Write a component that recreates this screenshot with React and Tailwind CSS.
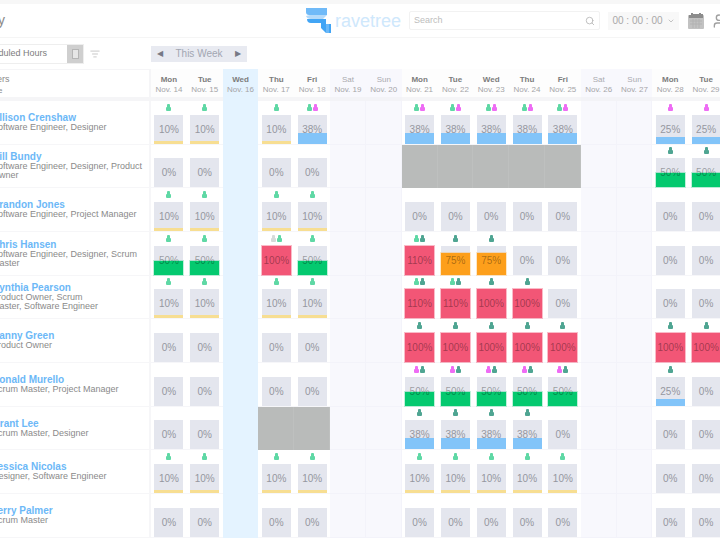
import { useState } from 'react';
import { ChevronDown, ListFilter, Search, Users } from 'lucide-react';

const DAYS = [
  { name: 'Mon', date: 'Nov. 14' },
  { name: 'Tue', date: 'Nov. 15' },
  { name: 'Wed', date: 'Nov. 16', type: 'today' },
  { name: 'Thu', date: 'Nov. 17' },
  { name: 'Fri', date: 'Nov. 18' },
  { name: 'Sat', date: 'Nov. 19', type: 'weekend' },
  { name: 'Sun', date: 'Nov. 20', type: 'weekend' },
  { name: 'Mon', date: 'Nov. 21' },
  { name: 'Tue', date: 'Nov. 22' },
  { name: 'Wed', date: 'Nov. 23' },
  { name: 'Thu', date: 'Nov. 24' },
  { name: 'Fri', date: 'Nov. 25' },
  { name: 'Sat', date: 'Nov. 26', type: 'weekend' },
  { name: 'Sun', date: 'Nov. 27', type: 'weekend' },
  { name: 'Mon', date: 'Nov. 28' },
  { name: 'Tue', date: 'Nov. 29' },
];

/* Cell format: "percent:markers". "off" is time off, "-" an empty day. */
const PEOPLE = [
  {
    name: 'Allison Crenshaw',
    roles: ['Software Engineer, Designer'],
    days: '10:g 10:g - 10:g 38:gm - - 38:gm 38:gm 38:gm 38:gm 38:gm - - 25:m 25:m',
  },
  {
    name: 'Bill Bundy',
    roles: ['Software Engineer, Designer, Product', 'Owner'],
    days: '0 0 - 0 0 - - off off off off off - - 50:t 50:t',
  },
  {
    name: 'Brandon Jones',
    roles: ['Software Engineer, Project Manager'],
    days: '10:g 10:g - 10:g 10:g - - 0 0 0 0 0 - - 0 0',
  },
  {
    name: 'Chris Hansen',
    roles: ['Software Engineer, Designer, Scrum', 'Master'],
    days: '50:g 50:g - 100:lg 50:g - - 110:gt 75:t 75:t 0 0 - - 0 0',
  },
  {
    name: 'Cynthia Pearson',
    roles: ['Product Owner, Scrum', 'Master, Software Engineer'],
    days: '10:g 10:g - 10:g 10:g - - 110:gt 110:gt 100:t 100:t 0 - - 0 0',
  },
  {
    name: 'Danny Green',
    roles: ['Product Owner'],
    days: '0 0 - 0 0 - - 100:t 100:t 100:t 100:t 100:t - - 100:t 100:t',
  },
  {
    name: 'Donald Murello',
    roles: ['Scrum Master, Project Manager'],
    days: '0 0 - 0 0 - - 50:mt 50:mt 50:mt 50:mt 50:mt - - 25:t 0',
  },
  {
    name: 'Grant Lee',
    roles: ['Scrum Master, Designer'],
    days: '0 0 - off off - - 38:t 38:t 38:t 38:t 0 - - 0 0',
  },
  {
    name: 'Jessica Nicolas',
    roles: ['Designer, Software Engineer'],
    days: '10:g 10:g - 10:g 10:g - - 10:g 10:g 10:g 10:g 10:g - - 0 0',
  },
  {
    name: 'Jerry Palmer',
    roles: ['Scrum Master'],
    days: '0 0 - 0 0 - - 0 0 0 0 0 - - 0 0',
  },
];

const MARKERS = {
  g: 'text-[#5fd8a5]',
  m: 'text-[#ee6cf4]',
  t: 'text-[#4fa592]',
  l: 'text-[#d5dad9]',
};

/* Colour of the load bar */
function barColor(percent) {
  if (percent >= 100) return 'bg-[#f25676] ring-1 ring-[#f25676]/40';
  if (percent >= 75) return 'bg-[#fd9f1b] ring-1 ring-[#fd9f1b]/25';
  if (percent >= 50) return 'bg-[#04c96f] ring-1 ring-[#04c96f]/25';
  if (percent >= 20) return 'bg-[#82c4f9]';
  return 'bg-[#f7de92]';
}

function columnColor(type) {
  if (type === 'today') return 'bg-[#e4f3ff]';
  if (type === 'weekend') return 'bg-[#f8f8fd] border-r border-b border-[#f3f3fa]';
  return 'bg-white border-b border-[#f6f6f9]';
}

function Marker({ color }) {
  return (
    <svg viewBox="0 0 5 7" className={`w-[5px] h-[7px] ${color}`} fill="currentColor" aria-hidden="true">
      <rect x="1" y="0" width="3" height="4" rx="1" />
      <rect x="0" y="3" width="5" height="4" rx="1" />
    </svg>
  );
}

function DayCell({ value, type }) {
  if (value === 'off') {
    return <td className="bg-[#b9bbba] border-r border-[#bec0bf]" />;
  }
  if (value === '-') return <td className={columnColor(type)} />;

  const [load, markers = ''] = value.split(':');
  const percent = Number(load);
  return (
    <td className={`p-0 align-bottom ${columnColor(type)}`}>
      <div className="flex flex-col items-center">
        <div className="h-[13px] pt-[2px] flex gap-px">
          {markers.split('').map((m) => (
            <Marker key={m} color={MARKERS[m]} />
          ))}
        </div>
        <div className="relative w-[29px] h-[29px] flex items-center justify-center bg-[#e4e6ee]">
          <div
            className={`absolute inset-x-0 bottom-0 ${barColor(percent)}`}
            style={{ height: `${Math.min(percent, 100)}%` }}
          />
          <span className={`relative text-[10px] leading-none ${percent >= 50 ? 'text-black/35' : 'text-[#9597a0]'}`}>
            {percent}%
          </span>
        </div>
      </div>
    </td>
  );
}

function Logo() {
  return (
    <div className="flex items-center gap-1">
      <svg viewBox="0 0 25 25" className="w-[25px] h-[25px]" aria-hidden="true">
        <path d="M0 0H21V7H3Q0 7 0 4Z" fill="#70baf8" />
        <path d="M0 8Q1 11 5 11H17L21 7H4Z" fill="#b4dafa" />
        <path d="M1 11H20V16H25V25H20L15 20V15H5Q1 15 1 11Z" fill="#42a5f5" />
        <path d="M20 16H23V25H20Z" fill="#6cb9f8" />
      </svg>
      <span className="text-[18px] leading-none text-[#cfe8fc]">ravetree</span>
    </div>
  );
}

function CalendarIcon() {
  return (
    <svg viewBox="0 0 16 16" className="w-4 h-4" aria-hidden="true">
      <rect x="0" y="2" width="16" height="14" rx="1" fill="#c2c2c2" />
      <path d="M3 0H5V1H11V0H13V1H15V5H1V2H3Z" fill="#8c8c8c" />
      <path d="M2 8H14M2 11H14M5 6V15M8 6V15M11 6V15" stroke="#b2b2b2" />
    </svg>
  );
}

export default function App() {
  const [query, setQuery] = useState('');

  return (
    <div className="overflow-hidden bg-white font-['Liberation_Sans',Arial,sans-serif] text-[#8a8a8a]">
      {/* Top bar */}
      <div className="h-1 bg-[#f7f7f7]" />
      <header className="h-[34px] flex items-center border-b border-[#f5f5f5]">
        <h1 className="w-[306px] shrink-0 pr-[301px] flex justify-end text-[14px] whitespace-nowrap">Capacity</h1>
        <Logo />
        <div className="flex-1 ml-2 h-[19px] flex items-center border border-[#f2f2f2] rounded-xs">
          <input
            type="search"
            aria-label="Search"
            placeholder="Search"
            value={query}
            onChange={(e) => setQuery(e.target.value)}
            className="flex-1 min-w-0 px-1 text-[9px] outline-none placeholder:text-[#bdbdbd]"
          />
          <Search className="w-[10px] h-[10px] mr-1 text-[#b5b5b5]" />
        </div>
        <button className="ml-2 w-[71px] h-[18px] flex items-center justify-center gap-1 bg-[#f8f8f8] text-[10px] text-[#a8a8a8] whitespace-nowrap">
          00 : 00 : 00
          <ChevronDown className="w-2 h-2" />
        </button>
        <button aria-label="Calendar" className="ml-[9px] shrink-0">
          <CalendarIcon />
        </button>
        <button aria-label="Team" className="ml-[9px] w-[7px] shrink-0 overflow-hidden text-[#a0a0a0]">
          <Users className="w-4 h-4" />
        </button>
      </header>

      {/* Filters */}
      <div className="h-[31px] flex items-center">
        <div className="relative w-[84px] h-5 flex border border-l-0 border-[#eeeeee]">
          <select
            aria-label="Hours"
            className="absolute -left-[22px] w-[105px] h-full appearance-none text-[9px] text-[#7d7d7d] outline-none"
          >
            <option>Scheduled Hours</option>
            <option>Actual Hours</option>
          </select>
          <span className="relative ml-auto w-4 flex items-center justify-center bg-[#cfcfcf] pointer-events-none">
            <span className="w-[7px] h-[10px] bg-[#e6e6e6] border border-[#b5b5b5]" />
          </span>
        </div>
        <button aria-label="Filter" className="ml-[6px] w-[54px] text-[#bdbdbd]">
          <ListFilter className="w-[10px] h-[10px]" />
        </button>
        <div className="ml-[7px] w-[96px] h-4 px-[5px] flex items-center justify-between bg-[#e8eaf1] text-[10px] text-[#a2a6b2]">
          <button aria-label="Previous week" className="w-2 text-[8px] leading-none text-[#777985]">◀</button>
          <button className="leading-none">This Week</button>
          <button aria-label="Next week" className="w-2 text-[8px] leading-none text-[#777985]">▶</button>
        </div>
      </div>

      {/* Capacity grid */}
      <table className="table-fixed w-[calc(100%+4px)] border-separate border-spacing-0">
        <colgroup>
          <col className="w-[151px]" />
          {DAYS.map((day) => (
            <col key={day.date} />
          ))}
        </colgroup>
        <thead>
          <tr className="h-8">
            <th className="p-0 align-top border-t border-r-2 border-b-4 border-[#f5f5f7] text-left font-normal text-[9px] leading-[12px]">
              <div className="-ml-[14px] pt-[3px]">Users</div>
              <div className="-ml-[14px] text-[8px]">Role</div>
            </th>
            {DAYS.map((day) => (
              <th
                key={day.date}
                className={`p-0 pt-[6px] align-top font-normal text-[8px] leading-[10px] whitespace-nowrap border-b-4 ${
                  day.type === 'today'
                    ? 'bg-[#e4f3ff] border-[#e4f3ff]'
                    : day.type === 'weekend'
                      ? 'bg-[#f8f8fd] border-[#f3f3f7]'
                      : 'bg-[#fdfdfd] border-[#f5f5f7]'
                }`}
              >
                <div className={day.type === 'weekend' ? 'text-[#aaaaaf]' : 'font-bold text-[#7c7c7c]'}>{day.name}</div>
                <div className="text-[#a5a5a8]">{day.date}</div>
              </th>
            ))}
          </tr>
        </thead>
        <tbody>
          {PEOPLE.map((person) => (
            <tr key={person.name} className="h-[44px] [&:nth-child(3n+2)]:h-[43px]">
              <th className="p-0 border-b border-r-2 border-[#f6f6f8] text-left font-normal text-[9px] leading-[9px] whitespace-nowrap">
                <div className="-ml-[8px]">
                  <a href="#person" className="block text-[10px] leading-[10px] font-bold text-[#6cb8f7]">{person.name}</a>
                  {person.roles.map((role) => (
                    <div key={role}>{role}</div>
                  ))}
                </div>
              </th>
              {person.days.split(' ').map((value, i) => (
                <DayCell key={DAYS[i].date} value={value} type={DAYS[i].type} />
              ))}
            </tr>
          ))}
        </tbody>
      </table>
    </div>
  );
}
